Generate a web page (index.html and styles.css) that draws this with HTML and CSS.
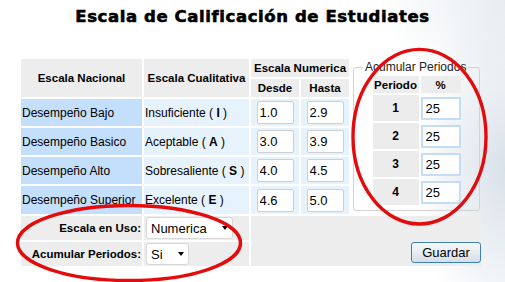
FILE: index.html
```html
<!DOCTYPE html>
<html lang="es">
<head>
<meta charset="utf-8">
<title>Escala de Calificación</title>
<link rel="stylesheet" href="styles.css">
</head>
<body>
<h1 class="title">Escala de Calificación de Estudiates</h1>
<table class="grid">
  <colgroup>
    <col class="w-nac"><col class="w-cual"><col class="w-num"><col class="w-num"><col class="w-fs">
  </colgroup>
  <tr class="r-h1">
    <th rowspan="2" class="hd">Escala Nacional</th>
    <th rowspan="2" class="hd">Escala Cualitativa</th>
    <th colspan="2" class="hd">Escala Numerica</th>
    <td rowspan="6" class="fs-cell">
      <fieldset class="fs">
        <legend>Acumular Periodos</legend>
        <table class="per">
          <tr class="per-h"><th class="hd w-p">Periodo</th><th class="hd w-v">%</th></tr>
          <tr class="per-r"><td class="pn">1</td><td class="pv"><input class="pin" value="25"></td></tr>
          <tr class="per-r"><td class="pn">2</td><td class="pv"><input class="pin" value="25"></td></tr>
          <tr class="per-r"><td class="pn">3</td><td class="pv"><input class="pin" value="25"></td></tr>
          <tr class="per-r"><td class="pn">4</td><td class="pv"><input class="pin" value="25"></td></tr>
        </table>
      </fieldset>
    </td>
  </tr>
  <tr class="r-h2">
    <th class="hd">Desde</th>
    <th class="hd">Hasta</th>
  </tr>
  <tr class="r-d">
    <td class="nac">Desempeño Bajo</td>
    <td class="cual">Insuficiente ( <b>I</b> )</td>
    <td class="num"><input class="nin" value="1.0"></td>
    <td class="num"><input class="nin" value="2.9"></td>
  </tr>
  <tr class="r-d">
    <td class="nac">Desempeño Basico</td>
    <td class="cual">Aceptable ( <b>A</b> )</td>
    <td class="num"><input class="nin" value="3.0"></td>
    <td class="num"><input class="nin" value="3.9"></td>
  </tr>
  <tr class="r-d">
    <td class="nac">Desempeño Alto</td>
    <td class="cual">Sobresaliente ( <b>S</b> )</td>
    <td class="num"><input class="nin" value="4.0"></td>
    <td class="num"><input class="nin" value="4.5"></td>
  </tr>
  <tr class="r-d r-last">
    <td class="nac">Desempeño Superior</td>
    <td class="cual">Excelente ( <b>E</b> )</td>
    <td class="num"><input class="nin" value="4.6"></td>
    <td class="num"><input class="nin" value="5.0"></td>
  </tr>
  <tr class="r-f">
    <th class="lbl">Escala en Uso:</th>
    <td class="selcell">
      <span class="sel sel-wide">
        <select><option>Numerica</option><option>Cualitativa</option></select>
      </span>
    </td>
    <td colspan="3" rowspan="2" class="actions"><button class="btn" type="button">Guardar</button></td>
  </tr>
  <tr class="r-f">
    <th class="lbl">Acumular Periodos:</th>
    <td class="selcell">
      <span class="sel sel-small">
        <select><option>Si</option><option>No</option></select>
      </span>
    </td>
  </tr>
</table>
<svg class="marks" width="505" height="282" viewBox="0 0 505 282" aria-hidden="true">
  <ellipse cx="419.5" cy="136.7" rx="66.5" ry="87.3" fill="none" stroke="#e30b0b" stroke-width="3.4"/>
  <ellipse cx="129" cy="243" rx="111.5" ry="37.5" fill="none" stroke="#e30b0b" stroke-width="3.4"/>
</svg>
</body>
</html>
```
FILE: styles.css
```css
html, body {
  margin: 0;
  padding: 0;
}
body {
  position: relative;
  width: 505px;
  height: 282px;
  overflow: hidden;
  font-family: "Liberation Sans", Arial, sans-serif;
  font-size: 12px;
  color: #000;
  background:
    radial-gradient(ellipse 90px 170px at 100% 60%, rgba(185, 200, 215, 0.55), rgba(255, 255, 255, 0) 100%),
    radial-gradient(ellipse 130px 90px at 100% 0%, rgba(205, 215, 225, 0.45), rgba(255, 255, 255, 0) 100%),
    #ffffff;
}
.title {
  margin: 0;
  padding-top: 7px;
  height: 50px;
  text-align: center;
  font-family: "DejaVu Sans", "Liberation Sans", sans-serif;
  font-weight: bold;
  font-size: 16.5px;
  line-height: 20px;
  letter-spacing: 0.6px;
  -webkit-text-stroke: 0.6px #000;
  color: #000;
}
.grid {
  border-collapse: separate;
  border-spacing: 2px;
  margin-left: 19px;
  table-layout: fixed;
  width: 465px;
}
.w-nac { width: 121px; }
.w-cual { width: 105px; }
.w-num { width: 48px; }
.w-fs { width: 131px; }
.grid th, .grid td {
  padding: 0 1px;
  box-sizing: border-box;
}
.hd {
  background: #ededed;
  font-weight: bold;
  font-size: 11.5px;
  text-align: center;
  white-space: nowrap;
}
.r-h1 > * { height: 18px; }
.r-h2 > * { height: 18px; }
.r-d > * { height: 27px; }
.r-last > * { height: 28px; }
.r-f > * { height: 24px; }
.nac {
  background: #c3dffb;
  white-space: nowrap;
}
.cual {
  background: #e6f2fc;
  white-space: nowrap;
}
.num {
  background: #e6f2fc;
  text-align: center;
}
.nin {
  box-sizing: border-box;
  width: 37px;
  height: 23px;
  margin: 0;
  padding: 0 2px;
  border: 1px solid #cfcfcf;
  border-radius: 2px;
  font-family: "Liberation Sans", Arial, sans-serif;
  font-size: 13px;
  vertical-align: middle;
  background: #fff;
}
.grid td.fs-cell {
  vertical-align: top;
  padding: 0;
}
.fs {
  margin: 1px 2px 0 2px;
  padding: 0 0 3px;
  border: 1px solid #d3d3d3;
  border-radius: 3px;
  min-width: 0;
}
.fs legend {
  margin-left: 9px;
  padding: 0 2px;
  font-size: 12px;
  line-height: 14px;
  color: #222;
}
.per {
  border-collapse: separate;
  border-spacing: 2px;
  margin: 0 auto;
}
.grid .per th, .grid .per td { padding: 0; }
.w-p { width: 46px; }
.w-v { width: 40px; }
.per-h > * { height: 17px; }
.per-r > * { height: 26px; }
.pn {
  background: #ececec;
  font-weight: bold;
  text-align: center;
  font-size: 12px;
}
.pv { text-align: center; }
.pin {
  box-sizing: border-box;
  width: 40px;
  height: 23px;
  margin: 0;
  padding: 0 3px;
  border: 2px solid #c4dcf6;
  border-radius: 1px;
  font-family: "Liberation Sans", Arial, sans-serif;
  font-size: 13px;
  vertical-align: middle;
  background: #fff;
}
.lbl {
  background: #ededed;
  text-align: right;
  font-weight: bold;
  font-size: 11.5px;
  white-space: nowrap;
}
.grid td.selcell {
  background: #ededed;
  padding: 1px 0 0 2px;
  vertical-align: top;
}
.sel {
  position: relative;
  display: block;
  width: max-content;
}
.sel select {
  appearance: none;
  -webkit-appearance: none;
  display: block;
  box-sizing: border-box;
  height: 22px;
  margin: 0;
  padding: 0 0 0 4px;
  border: 1px solid #d8d8d8;
  border-radius: 3px;
  background: #fff;
  font-family: "Liberation Sans", Arial, sans-serif;
  font-size: 13px;
  color: #000;
}
.sel-wide select { width: 87px; }
.sel-small select { width: 43px; }
.sel::after {
  content: "";
  position: absolute;
  right: 5px;
  top: 9px;
  border-left: 3.5px solid transparent;
  border-right: 3.5px solid transparent;
  border-top: 4px solid #000;
  pointer-events: none;
}
.grid td.actions {
  background: #ededed;
  text-align: right;
  vertical-align: bottom;
  padding: 0 1px 3px 0;
}
.btn {
  box-sizing: border-box;
  width: 70px;
  height: 21px;
  margin: 0;
  padding: 0;
  border: 1px solid #3f7fb3;
  border-radius: 3px;
  background: linear-gradient(#f5f9fc, #e6edf2 50%, #d3dee7);
  font-family: "Liberation Sans", Arial, sans-serif;
  font-size: 13px;
  color: #000;
  vertical-align: bottom;
}
.marks {
  position: absolute;
  left: 0;
  top: 0;
  pointer-events: none;
}
```
